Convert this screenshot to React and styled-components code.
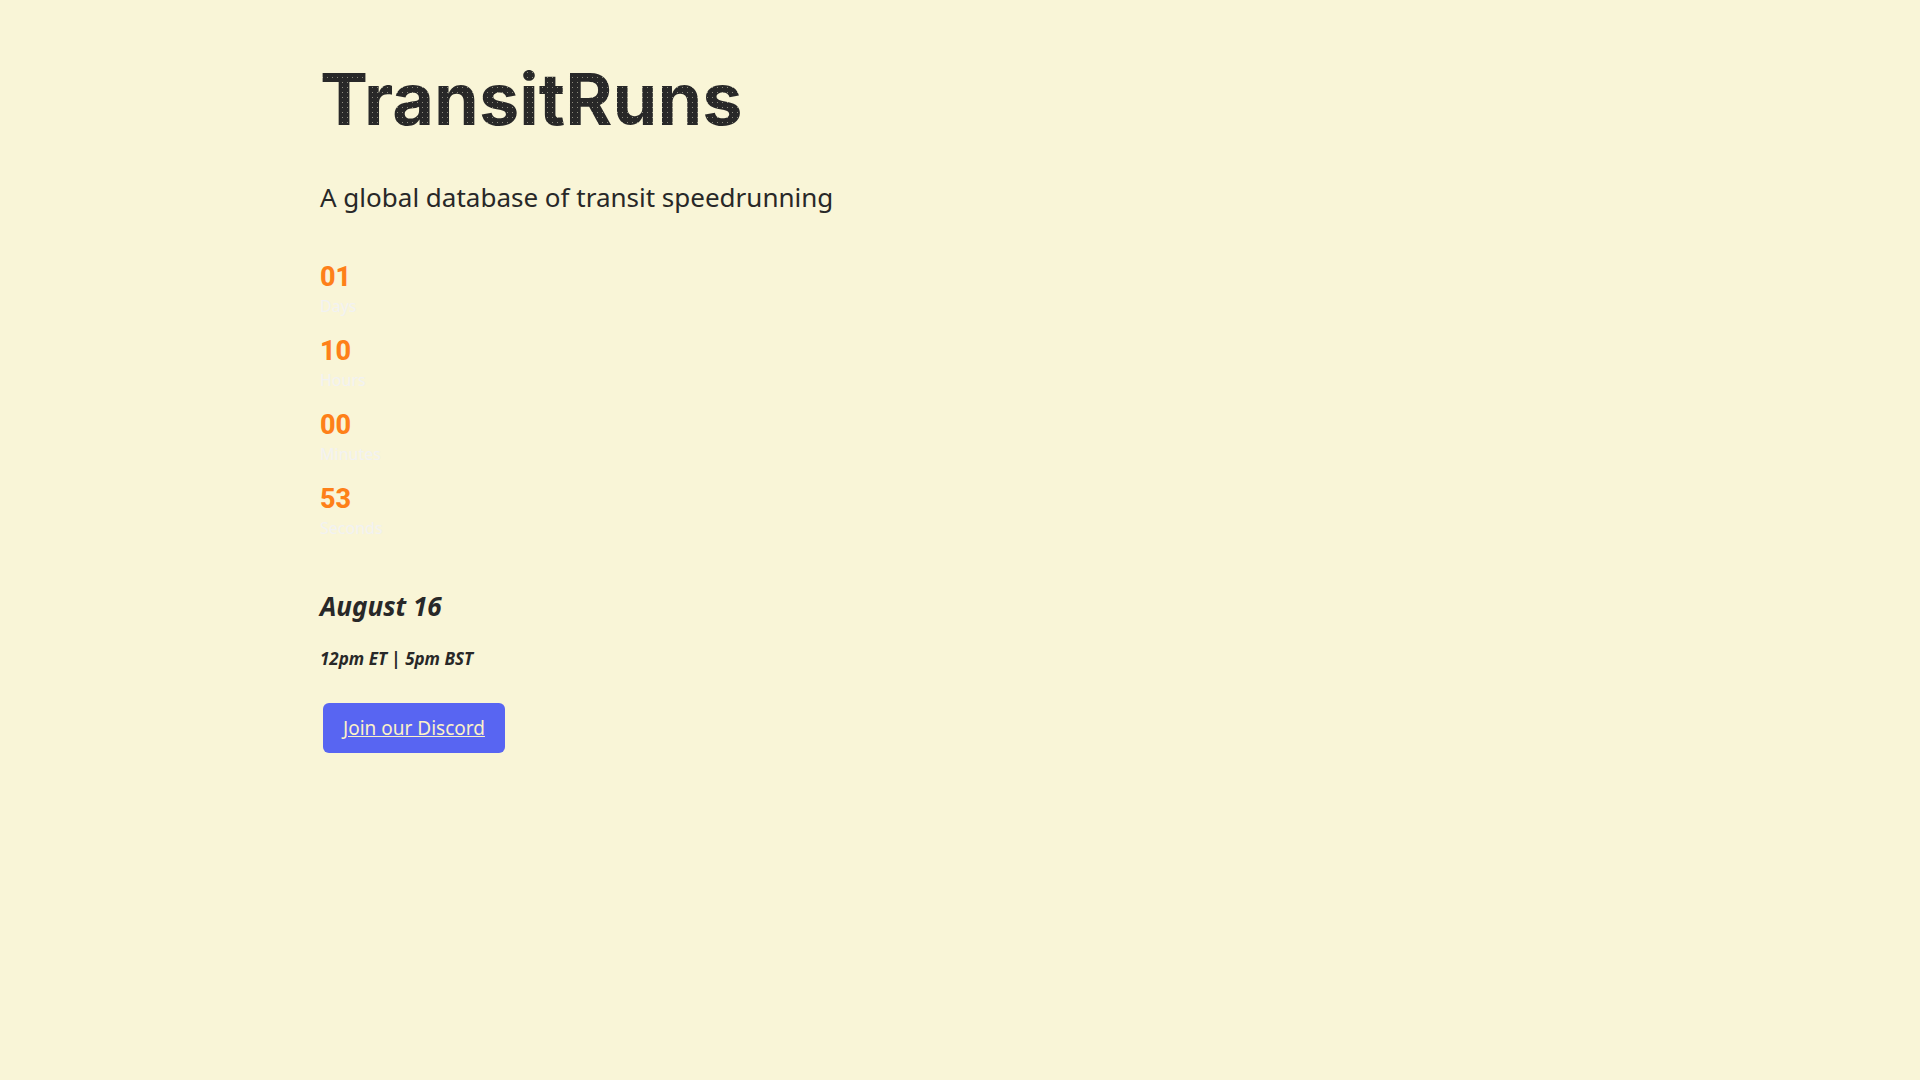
import React from 'react'
import styled, { createGlobalStyle } from 'styled-components'

const units = [
  { value: '01', label: 'Days' },
  { value: '10', label: 'Hours' },
  { value: '00', label: 'Minutes' },
  { value: '53', label: 'Seconds' },
];

function App() {
  return (
    <>
      <GlobalStyle />
      <Container>
        <Title>TransitRuns</Title>
        <Subtitle>A global database of transit speedrunning</Subtitle>
        <Countdown>
          {units.map((unit) => (
            <Unit key={unit.label}>
              <Value>{unit.value}</Value>
              <Label>{unit.label}</Label>
            </Unit>
          ))}
        </Countdown>
        <LaunchDate>August 16</LaunchDate>
        <LaunchTime>12pm ET | 5pm BST</LaunchTime>
        <DiscordLink href="#discord">Join our Discord</DiscordLink>
      </Container>
    </>
  )
}

const GlobalStyle = createGlobalStyle`
  body {
    margin: 0;
    background-color: #f9f5d7;
    color: #282828;
    font-family: "Noto Sans", sans-serif;
  }
`;

const Container = styled.main`
  max-width: 1280px;
  margin: 0 auto;
  padding: 55px 0;
`;

/* dark fill with a grid of small specks, like a dot-matrix sign */
const Title = styled.h1`
  width: fit-content;
  margin: 0 0 36px;
  font-family: Inter, sans-serif;
  font-size: 72px;
  line-height: 88px;
  font-weight: 700;
  color: transparent;
  background: radial-gradient(circle at center, #8c8a7c 0, #282828 1px) 0 0 / 5px 5px;
  background-clip: text;
`;

const Subtitle = styled.p`
  margin: 0 0 46px;
  font-size: 26px;
  line-height: 36px;
`;

const Countdown = styled.div`
  display: flex;
  flex-direction: column;
  gap: 16px;
  margin-bottom: 49px;
`;

const Unit = styled.div`
  display: flex;
  flex-direction: column;
`;

const Value = styled.span`
  font-family: Roboto, sans-serif;
  font-size: 27px;
  line-height: 32px;
  font-weight: 800;
  color: #fe8019;
`;

const Label = styled.span`
  font-size: 16px;
  line-height: 26px;
  color: #f2f2f2;
`;

const LaunchDate = styled.h2`
  margin: 0 0 25px;
  font-size: 26px;
  line-height: 32px;
  font-style: italic;
`;

const LaunchTime = styled.h4`
  margin: 0 0 32px;
  font-size: 17px;
  line-height: 24px;
  font-style: italic;
`;

const DiscordLink = styled.a`
  display: inline-block;
  margin: 0 3px;
  padding: 12px 20px;
  border-radius: 6px;
  background-color: #5865f2;
  color: #fbf1c7;
  font-size: 19px;
  line-height: 26px;
`;

export default App;
